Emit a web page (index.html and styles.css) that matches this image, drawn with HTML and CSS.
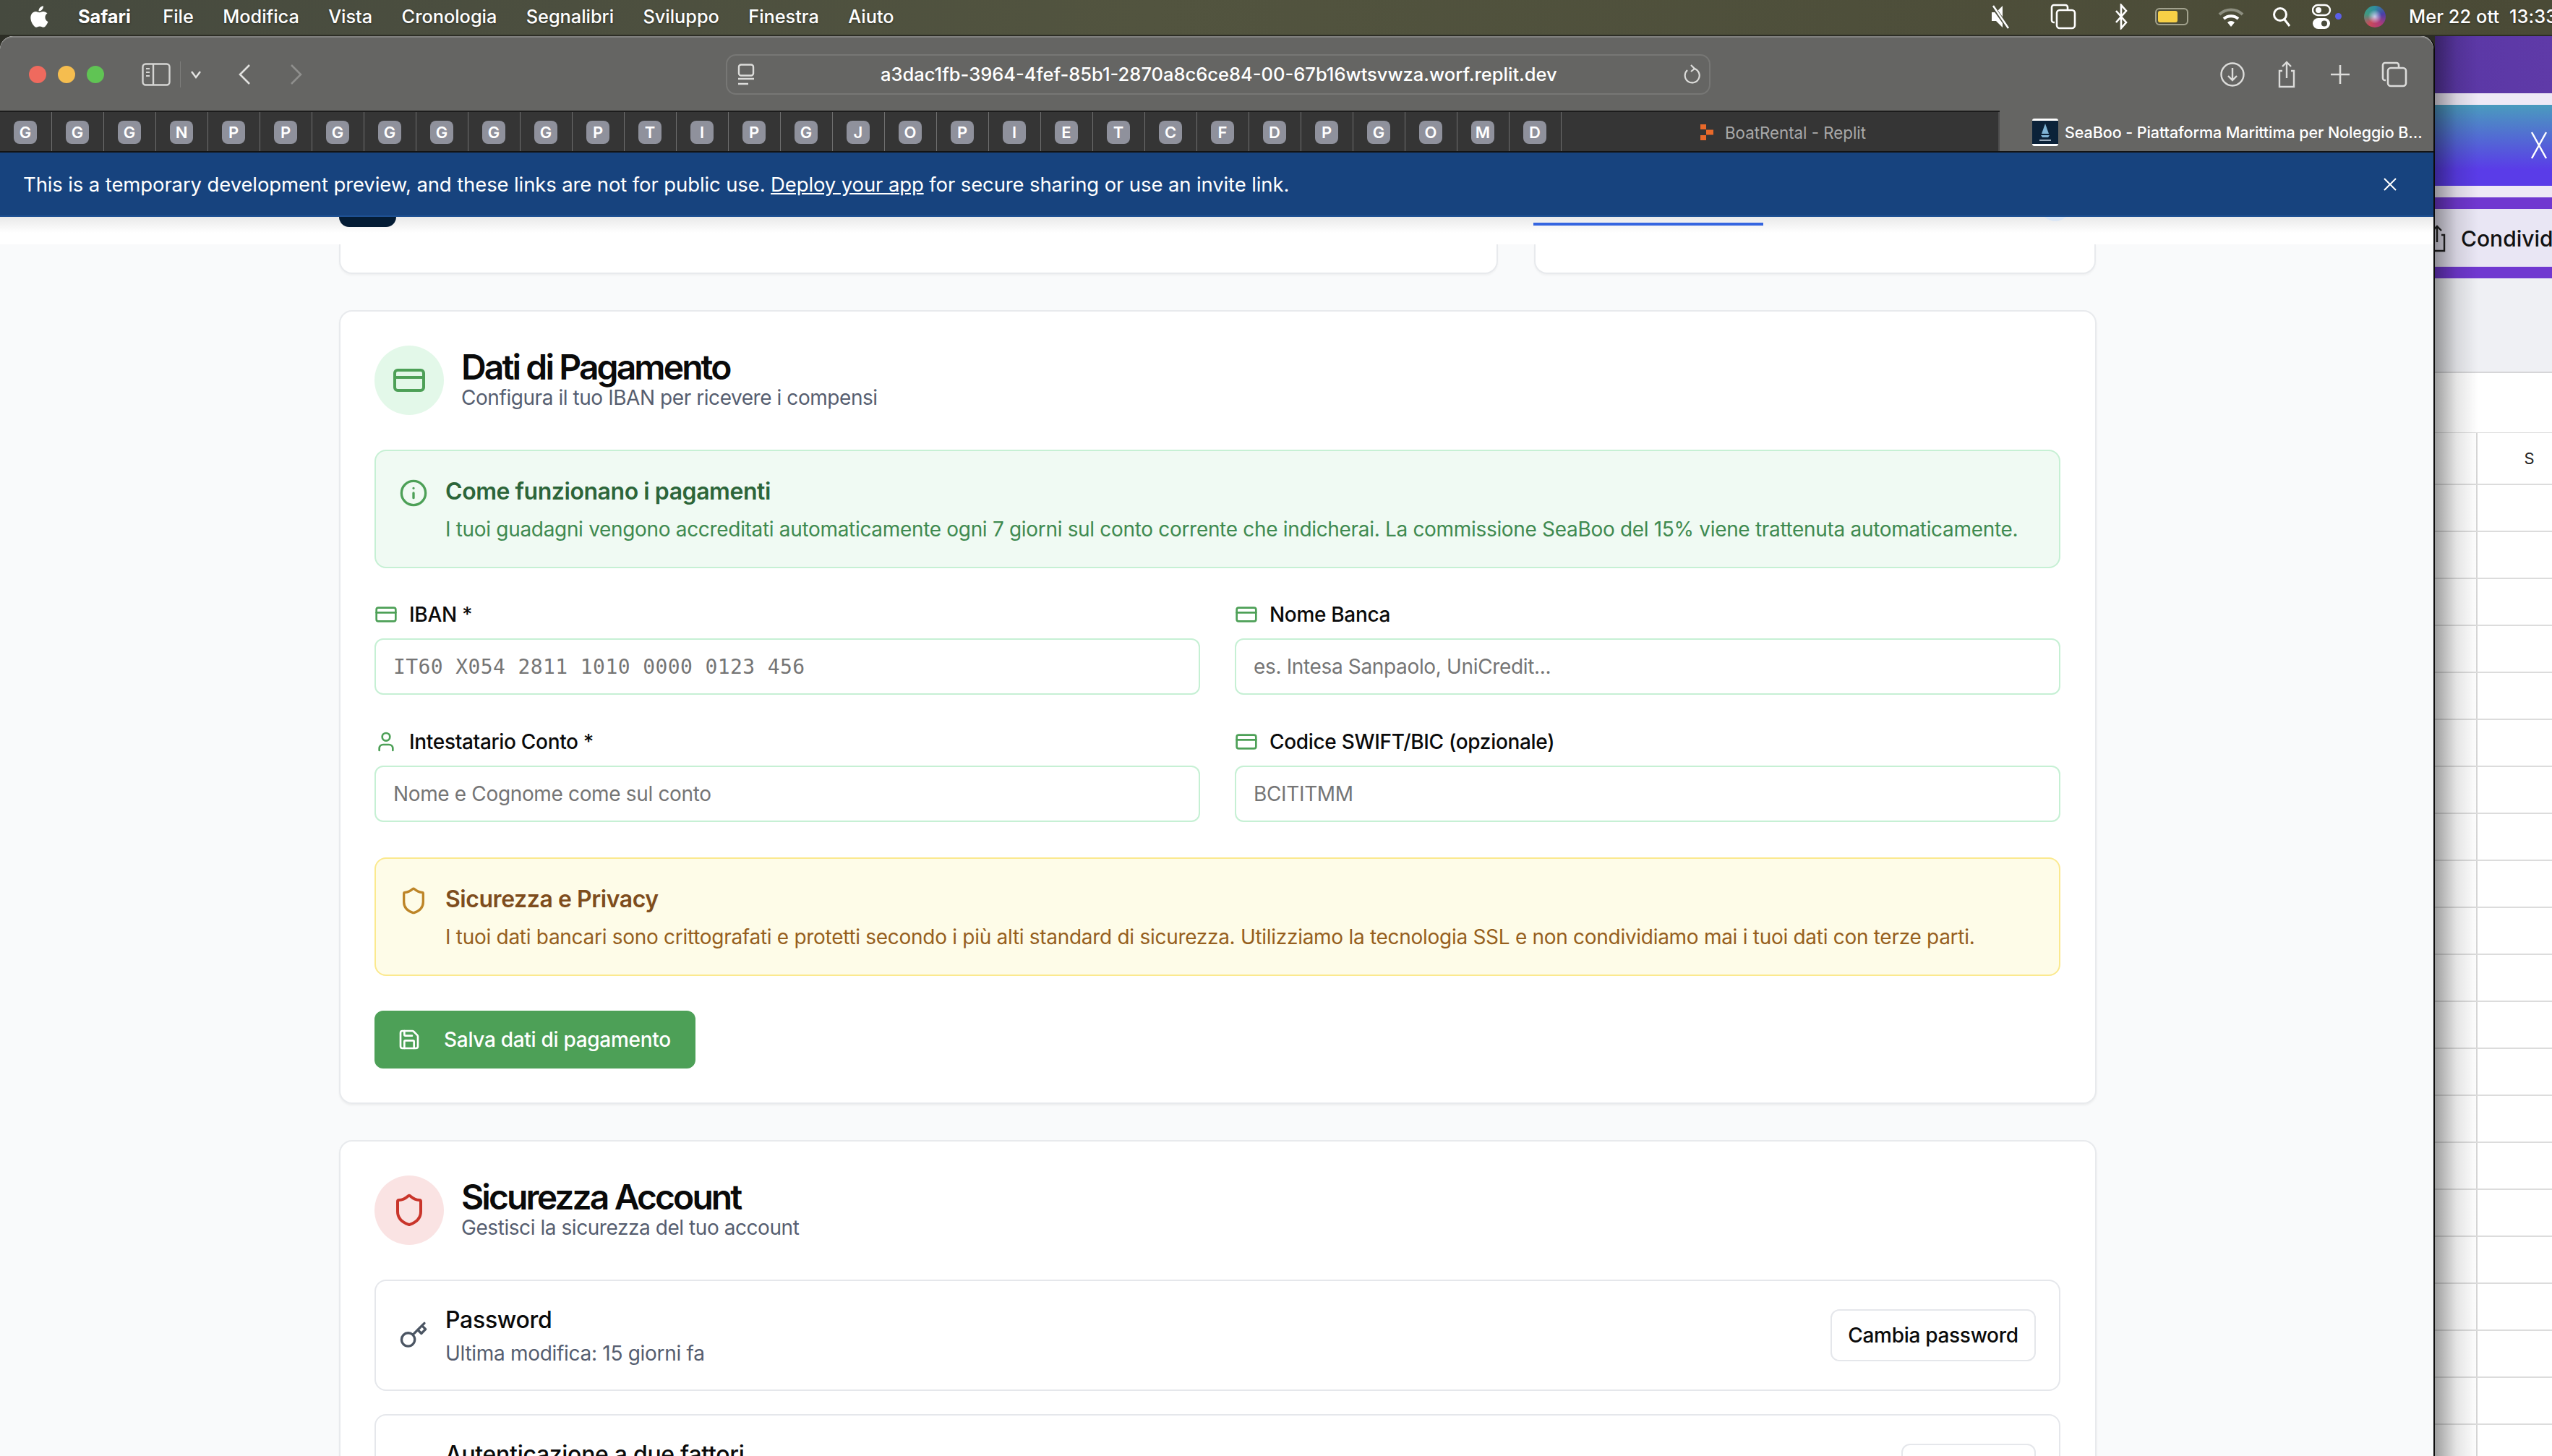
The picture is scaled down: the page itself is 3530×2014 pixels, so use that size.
FILE: index.html
```html
<!DOCTYPE html>
<html lang="it">
<head>
  <meta charset="UTF-8">
  <title>SeaBoo - Dati di Pagamento</title>
  <link rel="stylesheet" href="styles.css">
</head>
<body>

  <!-- macOS menu bar -->
  <header class="menubar">
    <svg class="apple" viewBox="0 0 24 28"><path fill="#fff" d="M17.2 1c.1 1.700-.5 3.200-1.500 4.400-1 1.200-2.600 2.100-4.100 2-.2-1.600.6-3.300 1.500-4.300C14.200 1.900 15.800 1.100 17.200 1zM22.300 9.800c-.2.100-2.900 1.700-2.900 5 0 3.900 3.400 5.200 3.500 5.300-.1.200-.6 1.900-1.800 3.700-1.100 1.600-2.200 3.100-4 3.100-1.700 0-2.200-1-4.200-1s-2.600 1-4.200 1.100c-1.700 0-3-1.700-4.100-3.300C2.300 20.400.6 14.800 2.900 11c1.100-1.900 3.100-3.100 5.200-3.100 1.700 0 3.200 1.100 4.200 1.100 1 0 2.800-1.300 4.800-1.100.8 0 3.100.3 4.600 2z"/></svg>
    <nav class="menu-items">
      <span class="menu-app">Safari</span>
      <span>File</span>
      <span>Modifica</span>
      <span>Vista</span>
      <span>Cronologia</span>
      <span>Segnalibri</span>
      <span>Sviluppo</span>
      <span>Finestra</span>
      <span>Aiuto</span>
    </nav>
    <div class="status-icons">
      <svg class="st-mute" viewBox="0 0 28 36"><path fill="#fff" d="M2 12h6l9-9v30l-9-9H2z"/><path d="M3 3l22 31" stroke="#4a4c3c" stroke-width="5"/><path d="M4 3l21 31" stroke="#fff" stroke-width="2.500"/></svg>
      <svg class="st-win" viewBox="0 0 36 36" fill="none" stroke="#fff" stroke-width="2.600"><path d="M6 26h-1a3 3 0 0 1-3-3V5a3 3 0 0 1 3-3h16a3 3 0 0 1 3 3v3"/><rect x="9" y="9" width="25" height="25" rx="4"/></svg>
      <svg class="st-bt" viewBox="0 0 20 36" fill="none" stroke="#fff" stroke-width="2.600"><path d="M3 10l14 16-7 8V2l7 8L3 26"/></svg>
      <div class="st-battery"><span class="st-charge"></span></div>
      <svg class="st-wifi" viewBox="0 0 36 28"><path d="M2 11a23 23 0 0 1 32 0" fill="none" stroke="#8d8f80" stroke-width="4"/><path d="M8 17a15 15 0 0 1 20 0" fill="none" stroke="#fff" stroke-width="4"/><path d="M18 28l-5-6a7 7 0 0 1 10 0z" fill="#fff"/></svg>
      <svg class="st-search" viewBox="0 0 26 28" fill="none" stroke="#fff" stroke-width="3"><circle cx="11" cy="11" r="8.500"/><path d="M17 18l7 9"/></svg>
      <div class="st-control"><svg viewBox="0 0 28 36"><rect x="1" y="2" width="24" height="14" rx="7" fill="none" stroke="#fff" stroke-width="2.400"/><circle cx="9" cy="9" r="4" fill="#fff"/><rect x="1" y="20" width="24" height="15" rx="7.500" fill="#fff"/><circle cx="17" cy="27.500" r="4" fill="#4a4c3c"/></svg><span class="st-dot"></span></div>
      <span class="st-siri"></span>
      <span class="st-clock">Mer 22 ott&nbsp;&nbsp;13:33</span>
    </div>
  </header>

  <div class="desktop">
    <!-- Safari window -->
    <main class="browser">
      <div class="toolbar">
        <div class="lights">
          <span class="light light-red"></span>
          <span class="light light-yellow"></span>
          <span class="light light-green"></span>
        </div>
        <svg class="ic-sidebar" viewBox="0 0 40 32" fill="none" stroke="#d5d5d3" stroke-width="2.400"><rect x="1.500" y="1.500" width="37" height="29" rx="4"/><path d="M16 2v28"/><path d="M6 8h5M6 13h5M6 18h5" stroke-width="2"/></svg>
        <span class="tool-sep"></span>
        <svg class="ic-chevron" viewBox="0 0 16 12" fill="none" stroke="#e4e4e2" stroke-width="2.400"><path d="M2 2l6 8 6-8"/></svg>
        <svg class="ic-back" viewBox="0 0 18 30" fill="none" stroke="#e0e0de" stroke-width="2.600"><path d="M16 2L3 15l13 13"/></svg>
        <svg class="ic-forward" viewBox="0 0 18 30" fill="none" stroke="#8f8f8d" stroke-width="2.600"><path d="M2 2l13 13L2 28"/></svg>
        <div class="urlbar">
          <svg class="ic-page" viewBox="0 0 24 30" fill="none" stroke="#dcdcda" stroke-width="2.400"><rect x="2" y="1.500" width="20" height="15" rx="3"/><path d="M1 21h22M1 28h14"/></svg>
          <span class="url-text">a3dac1fb-3964-4fef-85b1-2870a8c6ce84-00-67b16wtsvwza.worf.replit.dev</span>
          <svg class="ic-reload" viewBox="0 0 24 28" fill="none" stroke="#dcdcda" stroke-width="2.200"><path d="M6 8a10 10 0 1 0 10-2"/><path d="M11 1l5 5-5 4"/></svg>
        </div>
        <div class="tool-right">
          <svg class="ic-download" viewBox="0 0 36 36" fill="none" stroke="#dcdcda" stroke-width="2.400"><circle cx="18" cy="18" r="15.500"/><path d="M18 9v17M12 20l6 6 6-6"/></svg>
          <svg class="ic-share" viewBox="0 0 30 38" fill="none" stroke="#dcdcda" stroke-width="2.400"><path d="M9 14H5v22h20V14h-4"/><path d="M15 24V2M9 8l6-6 6 6"/></svg>
          <svg class="ic-plus" viewBox="0 0 30 30" fill="none" stroke="#dcdcda" stroke-width="2.600"><path d="M15 2v26M2 15h26"/></svg>
          <svg class="ic-tabs" viewBox="0 0 36 36" fill="none" stroke="#dcdcda" stroke-width="2.600"><path d="M6 26H5a3 3 0 0 1-3-3V5a3 3 0 0 1 3-3h16a3 3 0 0 1 3 3v3"/><rect x="9" y="9" width="25" height="25" rx="4"/></svg>
        </div>
      </div>

      <div class="tabbar">
        <div class="tab-pin"><span class="favicon">G</span></div>
        <div class="tab-pin"><span class="favicon">G</span></div>
        <div class="tab-pin"><span class="favicon">G</span></div>
        <div class="tab-pin"><span class="favicon">N</span></div>
        <div class="tab-pin"><span class="favicon">P</span></div>
        <div class="tab-pin"><span class="favicon">P</span></div>
        <div class="tab-pin"><span class="favicon">G</span></div>
        <div class="tab-pin"><span class="favicon">G</span></div>
        <div class="tab-pin"><span class="favicon">G</span></div>
        <div class="tab-pin"><span class="favicon">G</span></div>
        <div class="tab-pin"><span class="favicon">G</span></div>
        <div class="tab-pin"><span class="favicon">P</span></div>
        <div class="tab-pin"><span class="favicon">T</span></div>
        <div class="tab-pin"><span class="favicon">I</span></div>
        <div class="tab-pin"><span class="favicon">P</span></div>
        <div class="tab-pin"><span class="favicon">G</span></div>
        <div class="tab-pin"><span class="favicon">J</span></div>
        <div class="tab-pin"><span class="favicon">O</span></div>
        <div class="tab-pin"><span class="favicon">P</span></div>
        <div class="tab-pin"><span class="favicon">I</span></div>
        <div class="tab-pin"><span class="favicon">E</span></div>
        <div class="tab-pin"><span class="favicon">T</span></div>
        <div class="tab-pin"><span class="favicon">C</span></div>
        <div class="tab-pin"><span class="favicon">F</span></div>
        <div class="tab-pin"><span class="favicon">D</span></div>
        <div class="tab-pin"><span class="favicon">P</span></div>
        <div class="tab-pin"><span class="favicon">G</span></div>
        <div class="tab-pin"><span class="favicon">O</span></div>
        <div class="tab-pin"><span class="favicon">M</span></div>
        <div class="tab-pin"><span class="favicon">D</span></div>
        <div class="tab-plain">
          <svg class="replit-logo" viewBox="0 0 20 24" fill="#e8692a"><path d="M1 1h8v7H1zM9 8.500h10v7H9zM1 16h8v7H1z"/></svg>
          <span>BoatRental - Replit</span>
        </div>
        <div class="tab-active">
          <svg class="seaboo-logo" viewBox="0 0 36 38"><rect width="36" height="38" rx="3" fill="#fff"/><rect y="3" width="36" height="32" fill="#0b2239"/><path d="M18 7l5 14H13z" fill="#7fb4d6"/><path d="M12 23h12l-2 3h-8z" fill="#7fb4d6"/><rect x="10" y="29" width="16" height="2" fill="#9ab"/></svg>
          <span class="tab-title">SeaBoo - Piattaforma Marittima per Noleggio B...</span>
        </div>
      </div>

      <div class="preview-banner">
        <p>This is a temporary development preview, and these links are not for public use. <a href="#">Deploy your app</a> for secure sharing or use an invite link.</p>
        <svg class="banner-close" viewBox="0 0 20 20" fill="none" stroke="#fff" stroke-width="2"><path d="M2 2l16 16M18 2L2 18"/></svg>
      </div>

      <div class="page">
        <div class="site-band">
          <span class="band-logo"></span>
          <span class="band-tab"></span>
          <span class="band-avatar"></span>
        </div>

        <div class="container">
          <div class="top-cards">
            <div class="stub-card"></div>
            <div class="stub-card"></div>
          </div>

          <section class="card">
            <div class="card-head">
              <div class="head-circle head-green">
                <svg class="lucide" viewBox="0 0 24 24"><rect x="2" y="5" width="20" height="14" rx="2"/><path d="M2 10h20"/></svg>
              </div>
              <div>
                <h2>Dati di Pagamento</h2>
                <p class="head-sub">Configura il tuo IBAN per ricevere i compensi</p>
              </div>
            </div>

            <div class="notice notice-green">
              <svg class="lucide notice-icon" viewBox="0 0 24 24"><circle cx="12" cy="12" r="10"/><path d="M12 16v-4M12 8h.01"/></svg>
              <div>
                <h4>Come funzionano i pagamenti</h4>
                <p>I tuoi guadagni vengono accreditati automaticamente ogni 7 giorni sul conto corrente che indicherai. La commissione SeaBoo del 15% viene trattenuta automaticamente.</p>
              </div>
            </div>

            <div class="form-grid">
              <div>
                <label class="field-label" for="iban">
                  <svg class="lucide" viewBox="0 0 24 24"><rect x="2" y="5" width="20" height="14" rx="2"/><path d="M2 10h20"/></svg>
                  IBAN *
                </label>
                <input class="field mono" id="iban" placeholder="IT60 X054 2811 1010 0000 0123 456">
              </div>
              <div>
                <label class="field-label" for="banca">
                  <svg class="lucide" viewBox="0 0 24 24"><rect x="2" y="5" width="20" height="14" rx="2"/><path d="M2 10h20"/></svg>
                  Nome Banca
                </label>
                <input class="field" id="banca" placeholder="es. Intesa Sanpaolo, UniCredit...">
              </div>
              <div>
                <label class="field-label" for="intestatario">
                  <svg class="lucide" viewBox="0 0 24 24"><path d="M19 21v-2a4 4 0 0 0-4-4H9a4 4 0 0 0-4 4v2"/><circle cx="12" cy="7" r="4"/></svg>
                  Intestatario Conto *
                </label>
                <input class="field" id="intestatario" placeholder="Nome e Cognome come sul conto">
              </div>
              <div>
                <label class="field-label" for="swift">
                  <svg class="lucide" viewBox="0 0 24 24"><rect x="2" y="5" width="20" height="14" rx="2"/><path d="M2 10h20"/></svg>
                  Codice SWIFT/BIC (opzionale)
                </label>
                <input class="field" id="swift" placeholder="BCITITMM">
              </div>
            </div>

            <div class="notice notice-yellow">
              <svg class="lucide notice-icon" viewBox="0 0 24 24"><path d="M20 13c0 5-3.500 7.500-7.660 8.950a1 1 0 0 1-.67-.01C7.500 20.500 4 18 4 13V6a1 1 0 0 1 1-1c2 0 4.500-1.200 6.240-2.720a1.170 1.170 0 0 1 1.520 0C14.510 3.810 17 5 19 5a1 1 0 0 1 1 1z"/></svg>
              <div>
                <h4>Sicurezza e Privacy</h4>
                <p>I tuoi dati bancari sono crittografati e protetti secondo i più alti standard di sicurezza. Utilizziamo la tecnologia SSL e non condividiamo mai i tuoi dati con terze parti.</p>
              </div>
            </div>

            <button class="btn-save">
              <svg class="lucide" viewBox="0 0 24 24"><path d="M15.200 3a2 2 0 0 1 1.400.6l3.800 3.800a2 2 0 0 1 .6 1.400V19a2 2 0 0 1-2 2H5a2 2 0 0 1-2-2V5a2 2 0 0 1 2-2z"/><path d="M17 21v-7a1 1 0 0 0-1-1H8a1 1 0 0 0-1 1v7"/><path d="M7 3v4a1 1 0 0 0 1 1h7"/></svg>
              Salva dati di pagamento
            </button>
          </section>

          <section class="card">
            <div class="card-head">
              <div class="head-circle head-red">
                <svg class="lucide" viewBox="0 0 24 24"><path d="M20 13c0 5-3.500 7.500-7.660 8.950a1 1 0 0 1-.67-.01C7.500 20.500 4 18 4 13V6a1 1 0 0 1 1-1c2 0 4.500-1.200 6.240-2.720a1.170 1.170 0 0 1 1.520 0C14.510 3.810 17 5 19 5a1 1 0 0 1 1 1z"/></svg>
              </div>
              <div>
                <h2>Sicurezza Account</h2>
                <p class="head-sub">Gestisci la sicurezza del tuo account</p>
              </div>
            </div>

            <div class="setting-row">
              <svg class="lucide setting-icon" viewBox="0 0 24 24"><path d="M21 2l-2 2m-7.610 7.610a5.500 5.500 0 1 1-7.778 7.778 5.500 5.500 0 0 1 7.777-7.777zm0 0L15.500 7.500m0 0l3 3L22 7l-3-3m-3.500 3.500L19 4"/></svg>
              <div class="setting-text">
                <h4>Password</h4>
                <p>Ultima modifica: 15 giorni fa</p>
              </div>
              <button class="btn-outline">Cambia password</button>
            </div>

            <div class="setting-row">
              <div class="setting-icon"></div>
              <div class="setting-text">
                <h4>Autenticazione a due fattori</h4>
                <p></p>
              </div>
              <button class="btn-outline btn-short"></button>
            </div>
          </section>
        </div>
      </div>
    </main>

    <!-- window behind, on the right -->
    <aside class="behind">
      <div class="bh-purple"></div>
      <div class="bh-light"></div>
      <div class="bh-gradient"><svg class="bh-close" viewBox="0 0 24 40" fill="none" stroke="#fff" stroke-width="2.500"><path d="M2 2l20 36M22 2L2 38"/></svg></div>
      <div class="bh-light"></div>
      <div class="bh-stripe"></div>
      <div class="bh-share">
        <svg class="bh-share-icon" viewBox="0 0 30 38" fill="none" stroke="#222" stroke-width="2.400"><path d="M9 14H5v22h20V14h-4"/><path d="M15 24V2M9 8l6-6 6 6"/></svg>
        <span>Condividi</span>
      </div>
      <div class="bh-stripe"></div>
      <div class="bh-gray"></div>
      <div class="bh-blank"></div>
      <div class="bh-row bh-row-head"><span class="bh-side"></span><span class="bh-cell">S</span></div>
      <div class="bh-row"><span class="bh-side"></span><span class="bh-cell"></span></div>
      <div class="bh-row"><span class="bh-side"></span><span class="bh-cell"></span></div>
      <div class="bh-row"><span class="bh-side"></span><span class="bh-cell"></span></div>
      <div class="bh-row"><span class="bh-side"></span><span class="bh-cell"></span></div>
      <div class="bh-row"><span class="bh-side"></span><span class="bh-cell"></span></div>
      <div class="bh-row"><span class="bh-side"></span><span class="bh-cell"></span></div>
      <div class="bh-row"><span class="bh-side"></span><span class="bh-cell"></span></div>
      <div class="bh-row"><span class="bh-side"></span><span class="bh-cell"></span></div>
      <div class="bh-row"><span class="bh-side"></span><span class="bh-cell"></span></div>
      <div class="bh-row"><span class="bh-side"></span><span class="bh-cell"></span></div>
      <div class="bh-row"><span class="bh-side"></span><span class="bh-cell"></span></div>
      <div class="bh-row"><span class="bh-side"></span><span class="bh-cell"></span></div>
      <div class="bh-row"><span class="bh-side"></span><span class="bh-cell"></span></div>
      <div class="bh-row"><span class="bh-side"></span><span class="bh-cell"></span></div>
      <div class="bh-row"><span class="bh-side"></span><span class="bh-cell"></span></div>
      <div class="bh-row"><span class="bh-side"></span><span class="bh-cell"></span></div>
      <div class="bh-row"><span class="bh-side"></span><span class="bh-cell"></span></div>
      <div class="bh-row"><span class="bh-side"></span><span class="bh-cell"></span></div>
      <div class="bh-row"><span class="bh-side"></span><span class="bh-cell"></span></div>
      <div class="bh-row"><span class="bh-side"></span><span class="bh-cell"></span></div>
      <div class="bh-row"><span class="bh-side"></span><span class="bh-cell"></span></div>
      <span class="bh-shadow"></span>
    </aside>
  </div>

</body>
</html>
```

FILE: styles.css
```css
* {
  box-sizing: border-box;
}

html, body {
  margin: 0;
  height: 2014px;
  overflow: hidden;
}

body {
  width: 3530px;
  font-family: Inter, "Noto Sans", sans-serif;
  background: #2c2d25;
  color: #0a0a0a;
}

svg {
  display: block;
  flex-shrink: 0;
}

h2, h4, p {
  margin: 0;
}

/* menu bar */
.menubar {
  height: 48px;
  display: flex;
  align-items: center;
  padding: 0 0 3px 40px;
  background: linear-gradient(to right, #464a3f, #52543f 45%, #4a4a36);
  color: #fff;
  font-size: 25.300px;
  font-weight: 500;
  white-space: nowrap;
  overflow: hidden;
  text-shadow: 0 1px 3px rgba(0,0,0,0.4);
}

.apple {
  width: 28px;
  height: 32px;
}

.menu-items {
  display: flex;
  gap: 40.400px;
  margin-left: 40px;
}

.menu-app {
  font-weight: 700;
  margin-right: 4px;
}

.status-icons {
  margin-left: auto;
  display: flex;
  align-items: center;
  width: 777px;
  flex-shrink: 0;
}

.status-icons > * {
  flex-shrink: 0;
}

.st-mute { width: 28px; height: 36px; }
.st-win { width: 36px; height: 36px; margin-left: 55px; }
.st-bt { width: 20px; height: 36px; margin-left: 52px; }

.st-battery {
  width: 46px;
  height: 24px;
  margin-left: 37px;
  border: 2px solid #a2a28e;
  border-radius: 6px;
  padding: 2px;
}

.st-charge {
  display: block;
  width: 27px;
  height: 16px;
  background: #f7d046;
  border-radius: 3px;
}

.st-wifi { width: 36px; height: 28px; margin-left: 41px; }
.st-search { width: 26px; height: 28px; margin-left: 39px; }

.st-control {
  display: flex;
  align-items: center;
  gap: 4px;
  margin-left: 29px;
}

.st-control svg {
  width: 28px;
  height: 36px;
}

.st-dot {
  width: 9px;
  height: 9px;
  border-radius: 50%;
  background: #5b5fe8;
}

.st-siri {
  width: 30px;
  height: 30px;
  margin-left: 31px;
  border-radius: 50%;
  background: radial-gradient(circle, #c8c8e8 0, transparent 45%), conic-gradient(#2f8f9e, #4a3fa8, #b03a78, #c84a5a, #3f9a80, #2f8f9e);
}

.st-clock {
  margin-left: 32px;
  letter-spacing: 0.100px;
}

/* desktop */
.desktop {
  display: flex;
  height: 1966px;
  padding-top: 2px;
}

.browser {
  width: 3368px;
  flex-shrink: 0;
  border-right: 2px solid #0c0c0c;
  border-radius: 18px 18px 0 0;
  overflow: hidden;
  background: #f9fafb;
  position: relative;
  z-index: 1;
}

.toolbar {
  height: 105px;
  display: flex;
  align-items: center;
  padding-left: 40px;
  background: #656563;
  border-bottom: 2px solid #1c1c1c;
  border-top: 2px solid #80807e;
  border-radius: 18px 18px 0 0;
}

.lights {
  display: flex;
  gap: 16px;
}

.light {
  width: 24px;
  height: 24px;
  border-radius: 50%;
}

.light-red { background: #ef6a5e; }
.light-yellow { background: #f5bd4f; }
.light-green { background: #60c454; }

.ic-sidebar { width: 40px; height: 32px; margin-left: 52px; }

.tool-sep {
  width: 1px;
  height: 36px;
  margin-left: 13px;
  background: #7d7d7b;
}

.ic-chevron { width: 16px; height: 12px; margin-left: 13px; }
.ic-back { width: 18px; height: 30px; margin-left: 50px; }
.ic-forward { width: 18px; height: 30px; margin-left: 54px; }

.urlbar {
  width: 1362px;
  height: 56px;
  margin-left: 585px;
  display: flex;
  align-items: center;
  padding: 0 12px 0 14px;
  border: 2px solid #777775;
  border-radius: 14px;
  color: #fff;
}

.ic-page { width: 24px; height: 30px; }

.url-text {
  margin-left: 174px;
  font-size: 25.500px;
  font-weight: 500;
  white-space: nowrap;
}

.ic-reload { width: 24px; height: 28px; margin-left: auto; }

.tool-right {
  display: flex;
  align-items: center;
  margin-left: 704px;
}

.ic-download { width: 36px; height: 36px; }
.ic-share { width: 30px; height: 38px; margin-left: 42px; }
.ic-plus { width: 30px; height: 30px; margin-left: 44px; }
.ic-tabs { width: 36px; height: 36px; margin-left: 42px; }

.tabbar {
  height: 56px;
  display: flex;
  background: #353535;
  border-bottom: 2px solid #141414;
}

.tab-pin {
  width: 72px;
  flex-shrink: 0;
  padding: 2px 1px 0 0;
  display: flex;
  align-items: center;
  justify-content: center;
  border-right: 1px solid #6f6f6f;
}

.favicon {
  width: 32px;
  height: 32px;
  display: flex;
  align-items: center;
  justify-content: center;
  border-radius: 8px;
  background: #8f919c;
  color: #fff;
  font-size: 22px;
  font-weight: 600;
}

.tab-plain {
  width: 606px;
  display: flex;
  align-items: center;
  justify-content: center;
  gap: 15px;
  padding: 2px 0 0 8px;
  color: #a9a9a9;
  font-size: 22.300px;
  border-right: 2px solid #4d4d4d;
}

.replit-logo { width: 20px; height: 24px; }

.tab-active {
  flex: 1;
  margin-top: -2px;
  display: flex;
  align-items: center;
  padding: 4px 0 0 45px;
  gap: 9px;
  background: #656563;
  color: #fff;
  font-size: 21.500px;
  font-weight: 500;
  white-space: nowrap;
  overflow: hidden;
}

.seaboo-logo { width: 36px; height: 38px; }

.tab-title {
  letter-spacing: -0.080px;
}

.preview-banner {
  height: 89px;
  display: flex;
  align-items: center;
  justify-content: space-between;
  padding: 0 50px 0 32px;
  background: #17437e;
  border-bottom: 2px solid #1e5092;
  color: #fff;
  font-size: 27.500px;
  letter-spacing: -0.120px;
}

.preview-banner a {
  color: #fff;
  text-decoration: underline;
}

.banner-close {
  width: 20px;
  height: 20px;
}

/* page underneath */
.page {
  height: 1714px;
  overflow: hidden;
  background: #f9fafb;
}

.site-band {
  height: 38px;
  position: relative;
  background: linear-gradient(#e9e9e9, #fff 22px);
}

.band-logo {
  position: absolute;
  left: 469px;
  top: 0;
  width: 79px;
  height: 14px;
  background: #041c35;
  border-radius: 0 0 14px 14px;
}

.band-tab {
  position: absolute;
  left: 2121px;
  top: 8px;
  width: 318px;
  height: 4px;
  background: #3565e0;
}

.band-avatar {
  position: absolute;
  left: 2823px;
  top: -34px;
  width: 40px;
  height: 40px;
  border-radius: 50%;
  background: #dbe6f5;
}

.container {
  width: 2431px;
  margin-left: 469px;
}

.top-cards {
  display: grid;
  grid-template-columns: 1603px 777px;
  gap: 50px;
  height: 41px;
}

.stub-card {
  background: #fff;
  border: 2px solid #e8eaed;
  border-top: none;
  border-radius: 0 0 18px 18px;
  box-shadow: 0 2px 3px rgba(0,0,0,0.04);
}

.card {
  margin-top: 50px;
  padding: 47px 48px 47px 47px;
  background: #fff;
  border: 2px solid #e8eaed;
  border-radius: 18px;
  box-shadow: 0 2px 3px rgba(0,0,0,0.05);
}

.card-head {
  display: flex;
  align-items: center;
  gap: 24px;
  margin-bottom: 48px;
}

.card-head + .setting-row {
  margin-top: 2px;
}

.head-circle {
  width: 96px;
  height: 96px;
  flex-shrink: 0;
  display: flex;
  align-items: center;
  justify-content: center;
  border-radius: 50%;
}

.head-circle .lucide {
  width: 48px;
  height: 48px;
}

.head-green { background: #e3f8e9; color: #4da057; }
.head-red { background: #fae3e3; color: #c9352b; }

h2 {
  font-size: 48px;
  line-height: 48px;
  font-weight: 600;
  letter-spacing: -2.900px;
}

.head-sub {
  font-size: 28px;
  line-height: 36px;
  letter-spacing: -0.440px;
  color: #565e70;
}

.lucide {
  fill: none;
  stroke: currentColor;
  stroke-width: 2;
  stroke-linecap: round;
  stroke-linejoin: round;
}

.notice {
  display: flex;
  gap: 24px;
  padding: 32px;
  border: 2px solid;
  border-radius: 16px;
}

.notice-icon {
  width: 40px;
  height: 40px;
  margin-top: 6px;
}

.notice h4 {
  font-size: 32px;
  line-height: 48px;
  font-weight: 600;
  letter-spacing: -0.450px;
  margin-bottom: 8px;
}

.notice p {
  font-size: 28px;
  line-height: 40px;
  letter-spacing: -0.320px;
}

.notice-green {
  background: #f0faf3;
  border-color: #c6f0d4;
  color: #3f8a50;
}

.notice-green .notice-icon { color: #4da057; }
.notice-green h4 { color: #2c6539; }

.notice-yellow {
  background: #fefce8;
  border-color: #fbe98e;
  color: #965f1d;
  margin-top: 49px;
}

.notice-yellow p {
  letter-spacing: -0.290px;
}

.notice-yellow .notice-icon { color: #bd8528; }
.notice-yellow h4 { color: #7e4d1d; }

.form-grid {
  display: grid;
  grid-template-columns: 1fr 1fr;
  column-gap: 48px;
  row-gap: 45px;
  margin-top: 44px;
}

.field-label {
  display: flex;
  align-items: center;
  gap: 16px;
  height: 40px;
  margin-bottom: 13px;
  font-size: 28px;
  font-weight: 450;
  letter-spacing: -0.320px;
}

.field-label .lucide {
  width: 32px;
  height: 32px;
  color: #4da057;
}

.field {
  display: block;
  width: 100%;
  height: 78px;
  padding: 0 24px;
  background: #fff;
  border: 2px solid #c6f0d4;
  border-radius: 12px;
  font-family: Inter, sans-serif;
  font-size: 28px;
  letter-spacing: -0.350px;
}

.field::placeholder {
  color: #757575;
  opacity: 1;
}

.mono {
  font-family: "DejaVu Sans Mono", monospace;
  letter-spacing: 0.400px;
}

.btn-save {
  display: flex;
  align-items: center;
  gap: 32px;
  width: 444px;
  height: 80px;
  margin-top: 48px;
  padding: 0 32px;
  border: none;
  border-radius: 12px;
  background: #4da057;
  color: #fff;
  font-family: Inter, sans-serif;
  font-size: 28px;
  font-weight: 500;
  letter-spacing: -0.300px;
  white-space: nowrap;
}

.btn-save .lucide {
  width: 32px;
  height: 32px;
}

.setting-row {
  display: flex;
  align-items: center;
  gap: 24px;
  height: 154px;
  padding: 0 32px;
  border: 2px solid #e5e7eb;
  border-radius: 16px;
}

.setting-row + .setting-row {
  margin-top: 32px;
}

.setting-icon {
  width: 40px;
  height: 40px;
  color: #4b5563;
}

.setting-text {
  flex: 1;
}

.setting-text h4 {
  font-size: 32px;
  line-height: 48px;
  font-weight: 500;
  letter-spacing: -0.300px;
}

.setting-text p {
  margin-top: 2px;
  min-height: 40px;
  font-size: 28px;
  line-height: 40px;
  letter-spacing: -0.300px;
  color: #565e70;
}

.btn-outline {
  width: 284px;
  height: 72px;
  border: 2px solid #e5e7eb;
  border-radius: 12px;
  background: #fff;
  color: #0a0a0a;
  font-family: Inter, sans-serif;
  font-size: 28px;
  font-weight: 500;
  letter-spacing: -0.300px;
}

.btn-short {
  width: 186px;
}

/* window behind */
.behind {
  flex: 1;
  position: relative;
  background: #fff;
  overflow: hidden;
}

.bh-purple { height: 79px; background: linear-gradient(to right, #5a37a5, #5f3aa8); }
.bh-light { height: 16px; background: #eee9f6; }

.bh-gradient {
  height: 112px;
  display: flex;
  align-items: center;
  padding-left: 132px;
  background: linear-gradient(#4a9bbe, #5a3ce8 80%);
}

.bh-close { width: 24px; height: 40px; }

.bh-stripe { height: 16px; background: #7038d0; }

.bh-share {
  height: 80px;
  display: flex;
  align-items: center;
  gap: 18px;
  margin-left: -12px;
  padding-top: 2px;
  background: #e9e6f4;
  color: #111;
  font-size: 30px;
  font-weight: 500;
  white-space: nowrap;
}

.bh-share-icon { width: 30px; height: 38px; }

.bh-gray { height: 131px; background: #eff0f4; border-bottom: 2px solid #d6d6d8; }
.bh-blank { height: 83px; border-bottom: 1px solid #dcdcdc; }

.bh-row {
  height: 65px;
  display: flex;
  border-bottom: 2px solid #dcdcdc;
}

.bh-row-head {
  height: 72px;
}

.bh-side {
  width: 59px;
  border-right: 2px solid #d6d6d6;
}

.bh-cell {
  flex: 1;
  display: flex;
  align-items: center;
  justify-content: center;
  padding-left: 40px;
  font-size: 22px;
  color: #222;
}

.bh-shadow {
  position: absolute;
  left: 0;
  top: 0;
  bottom: 0;
  width: 60px;
  background: linear-gradient(to right, rgba(0,0,0,0.38), rgba(0,0,0,0.1) 50%, rgba(0,0,0,0));
}
```
